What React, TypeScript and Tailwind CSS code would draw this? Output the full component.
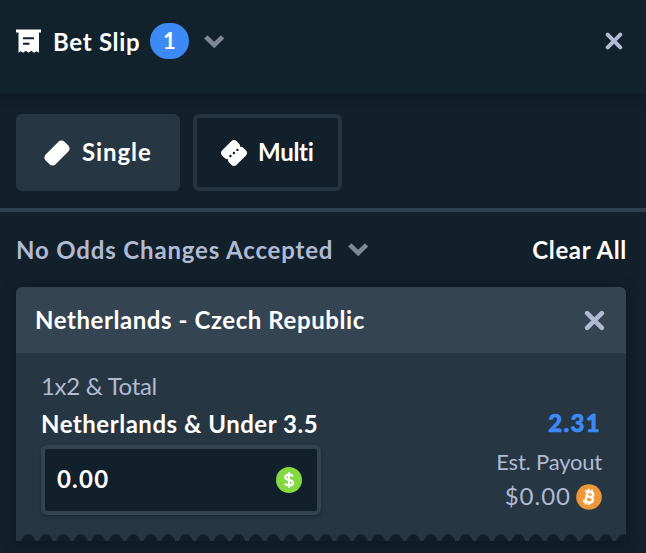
import { useState } from 'react';

function Chevron() {
  return (
    <svg className="h-[15px] w-[21px]" viewBox="0 0 21 15" fill="none">
      <path d="M1.8 2.8 10.2 11 18.6 2.8" stroke="#7d8795" strokeWidth="4.6" />
    </svg>
  );
}

function Cross({ className }: { className: string }) {
  return (
    <svg className={className} viewBox="0 0 20 20" fill="none">
      <path d="M3 3 17 17M17 3 3 17" stroke="#b1bad3" strokeWidth="4.4" strokeLinecap="round" />
    </svg>
  );
}

function SlipIcon() {
  return (
    <svg className="h-[25px] w-[25px]" viewBox="0 0 25 25">
      <path fill="#fff" d="M0 0.5h25v3h-2v20.3l-2.5-1.6-2.6 1.6-2.6-2-2.8 2-2.7-2-2.7 2-2.5-1.6L2.5 23.8V3.5H0z" />
      <path stroke="#12202b" strokeWidth="2" d="M7 9.2h11M7 14.7h6.5" />
    </svg>
  );
}

function TicketIcon() {
  return (
    <svg className="h-[26px] w-[26px] overflow-visible" viewBox="0 0 26 26">
      <rect x="-0.3" y="6" width="26.6" height="14" rx="4.3" fill="#fff" transform="rotate(-45 13 13)" />
    </svg>
  );
}

function MultiIcon() {
  return (
    <svg className="h-[26px] w-[26px] overflow-visible" viewBox="0 0 26 26">
      <g fill="#fff" transform="rotate(-45 13 13)">
        <rect x="2.8" y="2.8" width="20.4" height="10.6" rx="3.8" />
        <rect x="2.8" y="12.6" width="20.4" height="10.6" rx="3.8" />
      </g>
      <path stroke="#12202b" strokeWidth="2.4" strokeLinecap="round" d="M9.4 16h.01M12.900 13h.01M16.400 9.900h.01" />
    </svg>
  );
}

function DollarCoin() {
  return (
    <svg className="h-[26px] w-[26px]" viewBox="0 0 26 26" fill="none">
      <circle cx="13" cy="13" r="13" fill="#84d841" />
      <path
        d="M17 9.3C16.2 8.2 14.8 7.6 13 7.6c-2.2 0-3.7 1-3.7 2.6 0 3.8 7.7 1.7 7.7 5.5 0 1.7-1.6 2.8-3.9 2.8-1.9 0-3.4-.7-4.2-1.9M13 5.300v15.400"
        stroke="#fff"
        strokeWidth="2.1"
      />
    </svg>
  );
}

function BitcoinCoin() {
  return (
    <svg className="h-[26px] w-[26px]" viewBox="0 0 26 26" fill="none">
      <circle cx="13" cy="13" r="12.8" fill="#ee9738" />
      <g stroke="#fff" strokeWidth="2.4" transform="rotate(13 13 13)">
        <path d="M8 8h5.7c3.9 0 3.9 4.7 0 4.7h-3.3M10.4 12.7h3.700c4.500 0 4.500 5.500 0 5.500H8M10.400 8v10.200" />
        <path d="M11.200 5v3M14.400 5v3M11.200 18v3M14.400 18v3" strokeWidth="1.9" />
      </g>
    </svg>
  );
}

function App() {
  const [stake, setStake] = useState('0.00');

  return (
    <div className="h-[553px] w-[646px] overflow-hidden bg-[#12202b] font-['Lato',sans-serif] text-[24px] leading-[30px] font-bold text-white">
      <header className="flex h-[94px] items-start bg-[#12222d] pr-[23px] pl-4 shadow-[0_2px_8px_#0b1622]">
        <div className="mt-[29px]">
          <SlipIcon />
        </div>
        <h1 className="mt-[27px] ml-[12px] w-[97px] tracking-[0.7px] whitespace-nowrap">Bet Slip</h1>
        <span className="mt-[23px] flex h-9 w-[39px] items-center justify-center rounded-full bg-[#3d8af7] text-[22px]">1</span>
        <button className="mt-[34px] ml-[15px]">
          <Chevron />
        </button>
        <button className="mt-8 ml-auto">
          <Cross className="h-[18px] w-[18px]" />
        </button>
      </header>

      <div className="flex h-[118px] gap-[13px] border-b-4 border-[#2f404e] px-4 pt-5">
        <button className="flex h-[77px] w-[164px] items-center rounded-md bg-[#263642] pl-[28px]">
          <TicketIcon />
          <span className="mb-px ml-[12px] tracking-[0.9px]">Single</span>
        </button>
        <button className="flex h-[77px] w-[149px] items-center rounded-md border-4 border-[#243541] pl-[24px]">
          <MultiIcon />
          <span className="mb-px ml-[11px] tracking-[-0.3px]">Multi</span>
        </button>
      </div>

      <div className="flex h-[75px] items-center justify-between pr-[19px] pl-4">
        <button className="flex items-center gap-[16px] text-[#b1bad3]">
          <span className="w-[316px] text-left tracking-[0.84px] whitespace-nowrap">No Odds Changes Accepted</span>
          <Chevron />
        </button>
        <button className="tracking-[0.65px]">Clear All</button>
      </div>

      <section className="mx-4 w-[610px] shadow-[0_2px_10px_#0c1924]">
        <div className="flex h-[66px] items-center justify-between rounded-t-md bg-[#344452] pr-[21px] pl-[19px]">
          <h2 className="tracking-[0.57px]">Netherlands - Czech Republic</h2>
          <Cross className="h-[21px] w-[21px]" />
        </div>
        <div className="flex h-[181px] justify-between bg-[#263642] pr-6 pl-[25px]">
          <div>
            <p className="mt-[18px] font-normal tracking-[-0.3px] text-[#b1bad3]">1x2 &amp; Total</p>
            <p className="mt-[8px] tracking-[0.52px]">Netherlands &amp; Under 3.5</p>
            <div className="mt-[6px] flex h-[70px] w-[280px] items-center rounded-md border-4 border-[#324351] bg-[#12202b] pr-[15px] pl-[12px] shadow-[0_2px_3px_#1b2935]">
              <input
                className="w-0 flex-1 bg-transparent pb-0.5 tracking-[1.2px] outline-none"
                value={stake}
                onChange={(e) => setStake(e.target.value)}
              />
              <DollarCoin />
            </div>
          </div>
          <div className="flex flex-col items-end">
            <p className="mt-[55px] mr-px font-black tracking-[1.3px] text-[#3d8af7] [-webkit-text-stroke:0.7px_#3d8af7]">2.31</p>
            <p className="mt-[10px] text-[22px] leading-[28px] font-normal tracking-[-0.2px] text-[#b1bad3]">Est. Payout</p>
            <p className="mt-[5px] flex items-center gap-[5px] font-normal text-[#b1bad3]">
              <span className="mb-px tracking-[1px]">$0.00</span>
              <BitcoinCoin />
            </p>
          </div>
        </div>
        <svg className="block h-[7px] w-[610px] bg-[#263642]" viewBox="0 0 610 7">
          <defs>
            <pattern id="teeth" x="3.5" width="17.5" height="7" patternUnits="userSpaceOnUse">
              <path d="M2 7V5.500Q3.200 4.500 4 2.800 6 0 8.800 0t4.800 2.800Q14.400 4.500 15.600 5.500V7z" fill="#101e29" />
            </pattern>
          </defs>
          <rect x="3.5" width="606.5" height="7" fill="url(#teeth)" />
        </svg>
      </section>
    </div>
  );
}

export default App;
